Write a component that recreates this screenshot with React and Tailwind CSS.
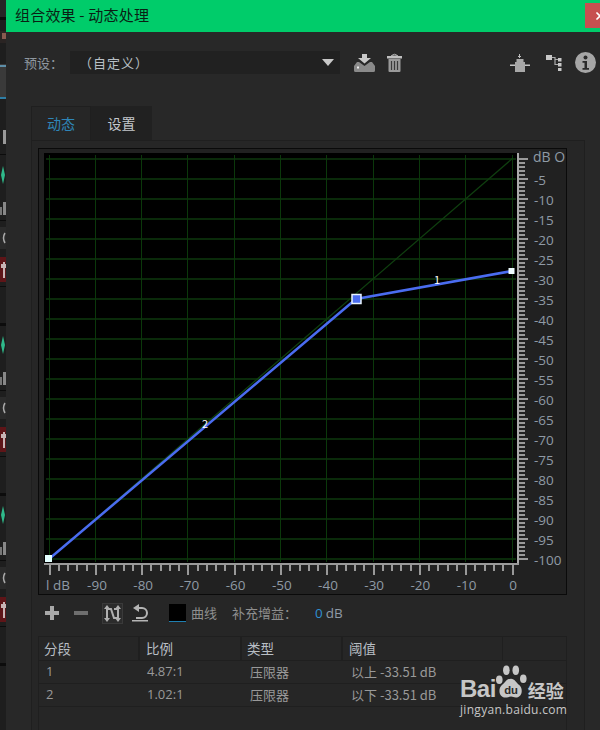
import { X } from 'lucide-react';

const cjk = '"Noto Sans CJK SC", "Noto Sans", sans-serif';
const ROWS = [
  ['1', '4.87:1', '压限器', '以上 -33.51 dB'],
  ['2', '1.02:1', '压限器', '以下 -33.51 dB'],
];

// strip of the window that sits behind this dialog
function BackgroundStrip() {
  const repeat = [0, 170, 340];
  return (
    <svg width="6" height="730" className="block shrink-0">
      <rect width="6" height="730" fill="#1e1e1e" />
      <rect y="0" width="6" height="17" fill="#262626" />
      <rect y="17" width="6" height="3" fill="#0c0c0c" />
      <rect y="31" width="6" height="12" fill="#2a2423" />
      <rect x="2" y="33" width="4" height="6" fill="#8a5a50" />
      <rect y="64" width="6" height="35" fill="#3a3a3a" />
      <rect y="65" width="6" height="2" fill="#5d8ea8" />
      <rect y="97" width="6" height="2" fill="#2f7ea6" />
      <rect x="3" y="130" width="3" height="14" fill="#999" />
      <rect y="154" width="6" height="1" fill="#0c0c0c" />
      {repeat.map((d) => (
        <g key={d} transform={`translate(0 ${d})`}>
          <path d="M3 166 L5 175 L3 184 L1 175 Z" fill="#2fb98a" />
          <rect x="0" y="207" width="2" height="8" fill="#777" />
          <rect x="3" y="202" width="3" height="13" fill="#888" />
          <rect y="220" width="6" height="1" fill="#0c0c0c" />
          <rect y="227" width="6" height="22" fill="#2b2b2b" />
          <path d="M5 233 Q2 238 5 243" stroke="#aaa" strokeWidth="1.5" fill="none" />
          <rect y="257" width="6" height="25" fill="#5e1518" />
          <rect x="3" y="262" width="2" height="16" fill="#c9b5b5" />
          <rect x="1" y="264" width="5" height="4" fill="#c9b5b5" />
          <rect y="286" width="6" height="1" fill="#0c0c0c" />
          <rect y="323" width="6" height="3" fill="#0c0c0c" />
        </g>
      ))}
    </svg>
  );
}

function PresetIcons() {
  return (
    <div className="flex items-center ml-[14px]">
      <svg width="22" height="18" viewBox="0 0 22 18" className="block">
        <path d="M8 0h5v4h4l-6.500 5.500L4 4h4z" fill="#c8c8c8" />
        <path d="M3 8h2l5.500 4 5.500-4h2l3 4v4.500a1.500 1.500 0 0 1-1.500 1.500H1.500A1.500 1.500 0 0 1 0 16.500V12z" fill="#8a8a8a" />
        <rect x="3" y="12.500" width="2" height="2" fill="#eee" />
      </svg>
      <svg width="15" height="19" viewBox="0 0 15 19" className="block ml-[11px]">
        <path d="M4.500 2.500 Q7.500 0 10.500 2.500 L10.500 3 L4.500 3Z" fill="none" stroke="#bbb" />
        <rect x="0" y="3" width="15" height="2.500" fill="#c0c0c0" />
        <path d="M1.500 6h12v12a1 1 0 0 1-1 1h-10a1 1 0 0 1-1-1z" fill="#9a9a9a" />
        <path d="M4.500 8v9M7.500 8v9M10.500 8v9" stroke="#3a3a3a" strokeWidth="1.200" />
      </svg>
    </div>
  );
}

function RightIcons() {
  return (
    <div className="flex items-center ml-auto">
      <svg width="20" height="18" viewBox="0 0 20 18" className="block">
        <path d="M9.500 0v4M8 2.500h3" stroke="#bbb" fill="none" />
        <rect x="6.500" y="5" width="7" height="3" fill="#aaa" />
        <rect x="0" y="10.500" width="20" height="1.500" fill="#c4c4c4" />
        <rect x="5" y="8" width="10" height="10" fill="#a8a8a8" />
      </svg>
      <svg width="16" height="16" viewBox="0 0 16 16" className="block ml-[16px]">
        <rect x="0" y="0" width="6" height="5" fill="#c8c8c8" />
        <rect x="12" y="3" width="3.500" height="3.500" fill="#c8c8c8" />
        <rect x="12" y="8" width="3.500" height="3.500" fill="#c8c8c8" />
        <rect x="12" y="13" width="3.500" height="3" fill="#c8c8c8" />
        <path d="M6 2.500h3v7h3M9 4.500h3" stroke="#aaa" strokeWidth="1.200" fill="none" />
      </svg>
      <svg width="21" height="21" viewBox="0 0 21 21" className="block ml-[13px]">
        <circle cx="10.500" cy="10.500" r="10.500" fill="#a6a6a6" />
        <circle cx="10.500" cy="5.500" r="2" fill="#2a2a2a" />
        <path d="M7.500 9h4.500v7h2v1.800H7.500V16h2v-5.200h-2z" fill="#2a2a2a" />
      </svg>
    </div>
  );
}

function CurveChart() {
  const hLines = Array.from({ length: 21 }, (_, i) => 159 + i * 20);
  const vLines = Array.from({ length: 11 }, (_, i) => Math.floor(49 + i * 46.3) + 0.5);
  const rightTicks = Array.from({ length: 101 }, (_, i) => i);
  const bottomTicks = Array.from({ length: 51 }, (_, i) => i);
  const rightLabels = Array.from({ length: 20 }, (_, i) => (i + 1) * 5);
  const bottomLabels = [90, 80, 70, 60, 50, 40, 30, 20, 10];
  return (
    <svg width="529" height="447" viewBox="38 148 529 447" className="block">
      <rect x="38.500" y="148.500" width="528" height="446" fill="#212121" stroke="#0a0a0a" />
      <rect x="44" y="153" width="473" height="410" fill="#000" />
      {hLines.map((y) => (
        <line key={y} x1="46" x2="516" y1={y} y2={y} stroke="#0a2a0a" strokeWidth="2" />
      ))}
      {vLines.map((x) => (
        <line key={x} x1={x} x2={x} y1="155" y2="562" stroke="#0b380b" />
      ))}
      <line x1="49" y1="559" x2="513" y2="158" stroke="#0f3f0f" strokeWidth="1.200" />
      <rect x="517" y="153" width="2" height="411" fill="#aaa" />
      <rect x="44" y="563" width="475" height="2" fill="#999" />
      {rightTicks.map((i) => {
        const y = 158 + i * 4;
        return <rect key={i} x="519" y={y} width={i % 5 === 0 ? 9 : 6} height="2" fill="#999" />;
      })}
      {bottomTicks.map((i) => {
        const x = Math.floor(49 + i * 9.26);
        return <rect key={i} x={x} y="565" width="2" height={i % 5 === 0 ? 10 : 6} fill="#999" />;
      })}
      <polyline points="49,559 356,299 512,271" fill="none" stroke="#4a6cf0" strokeWidth="2.500" />
      <rect x="352" y="294.500" width="9" height="9" fill="#4a6cf0" stroke="#e8f4ff" strokeWidth="1.500" />
      <rect x="508.500" y="268" width="6" height="6" fill="#eefcff" />
      <rect x="45" y="555" width="7" height="7" fill="#e4ffff" />
      <g fontSize="11" fill="#fff" textAnchor="middle" style={{ fontFamily: cjk }}>
        <text x="437" y="284">1</text>
        <text x="205" y="428">2</text>
      </g>
      <g fontSize="14" fill="#8f9aa5" style={{ fontFamily: '"Open Sans", sans-serif' }}>
        <text x="533" y="162" fontSize="14">dB O</text>
        {rightLabels.map((v, i) => (
          <text key={v} x="534" y={185 + i * 20} fontSize="13.500">-{v}</text>
        ))}
        <text x="46" y="590" fontSize="13.500">l dB</text>
        {bottomLabels.map((v, i) => (
          <text key={v} x={97 + i * 46.2} y="590" textAnchor="middle" fontSize="13.500">-{v}</text>
        ))}
        <text x="513" y="590" textAnchor="middle" fontSize="13.500">0</text>
      </g>
    </svg>
  );
}

function CurveTools() {
  return (
    <div className="flex items-center h-[41px] pb-[5px] pl-[7px]">
      <svg width="14" height="14" viewBox="0 0 14 14" className="block">
        <path d="M5 0h4v5h5v4H9v5H5V9H0V5h5z" fill="#a8a8a8" />
      </svg>
      <svg width="14" height="14" viewBox="0 0 14 14" className="block ml-[15px]">
        <rect y="5" width="14" height="4" fill="#6e6e6e" />
      </svg>
      <div className="w-[21px] h-[21px] ml-[14px] bg-[#2c2c2c] border border-[#3a3a3a] flex items-center justify-center">
        <svg width="19" height="19" viewBox="0 0 19 19" className="block">
          <path d="M4 3v13M15 3v13M4 5h4l3 9h4M15 5h-4" stroke="#b0b0b0" strokeWidth="2" fill="none" />
          <path d="M1 5l3-4 3 4zM12 5l3-4 3 4zM1 14l3 4 3-4zM12 14l3 4 3-4z" fill="#b0b0b0" />
        </svg>
      </div>
      <svg width="17" height="18" viewBox="0 0 17 18" className="block ml-[9px]">
        <path d="M5 4h5a5 5 0 0 1 0 10H4" stroke="#b4b4b4" strokeWidth="2" fill="none" />
        <path d="M7 0v8L1 4z" fill="#b4b4b4" />
        <rect x="0" y="16" width="16" height="1.500" fill="#b4b4b4" />
      </svg>
      <div className="w-[17px] h-[18px] ml-[20px] bg-black border-b border-[#1f7fb0]" />
      <span className="ml-[5px] text-[13px] text-[#8f8f8f]">曲线</span>
      <span className="ml-[15px] w-[65px] whitespace-nowrap text-[13px] text-[#8f8f8f]">补充增益：</span>
      <span className="ml-[18px] text-[13.500px] text-[#2f8fd0]" style={{ fontFamily: '"Open Sans", sans-serif' }}>0</span>
      <span className="ml-[3px] text-[13.500px] text-[#8f9aa5]" style={{ fontFamily: '"Open Sans", sans-serif' }}>dB</span>
    </div>
  );
}

function BaiduMark() {
  return (
    <div className="absolute left-[460px] top-[665px] w-[110px] h-[52px] text-[#c6c6c6]">
      <div className="flex items-start">
        <span className="text-[24px] leading-[26px] font-bold tracking-[-0.5px] mt-[11px]" style={{ fontFamily: '"Liberation Sans", sans-serif' }}>Bai</span>
        <svg width="32" height="35" viewBox="0 0 34 36" className="block">
          <ellipse cx="3.500" cy="15" rx="3.500" ry="4.500" fill="#c6c6c6" />
          <ellipse cx="11" cy="5" rx="3.500" ry="5" fill="#c6c6c6" />
          <ellipse cx="21" cy="5" rx="3.500" ry="5" fill="#c6c6c6" />
          <ellipse cx="29" cy="14" rx="3.500" ry="4.500" fill="#c6c6c6" />
          <path d="M16 14c4 0 5 4 9 7 4 4 3 13-4 13-2 0-3-1-5-1s-3 1-6 1c-7 0-8-9-4-13 4-3 5-7 10-7z" fill="#c6c6c6" />
          <text x="16" y="30" fontSize="12" fontWeight="700" fill="#2a2a2a" textAnchor="middle" style={{ fontFamily: '"Liberation Sans", sans-serif' }}>du</text>
        </svg>
        <span className="text-[18px] leading-[22px] font-bold mt-[14px]">经验</span>
      </div>
      <div className="text-[12px] leading-[14px] mt-[1px] tracking-[0.3px]" style={{ fontFamily: '"Open Sans", sans-serif' }}>jingyan.baidu.com</div>
    </div>
  );
}

export default function App() {
  return (
    <div className="relative flex w-[600px] h-[730px] overflow-hidden bg-[#282828]" style={{ fontFamily: cjk }}>
      <BackgroundStrip />
      <div className="flex-1 min-w-0 flex flex-col">
        <header className="flex h-8 shrink-0 bg-[#00cc6a]">
          <div className="pl-[9px] text-[15px] leading-[30px] text-[#0a1f14] tracking-[0.2px]">组合效果 - 动态处理</div>
          <button className="ml-auto -mr-[15px] mt-[3px] w-[30px] h-[25px] bg-[#c75050] flex items-center justify-center text-white">
            <X size={12} strokeWidth={3.500} />
          </button>
        </header>

        <div className="flex items-center h-[23px] mt-[19px] pl-[18px] pr-[4px] shrink-0">
          <span className="w-[46px] text-[13px] text-[#8f98a0]">预设：</span>
          <div className="flex items-center w-[270px] h-[23px] bg-[#212121] pl-[9px] pr-[6px]">
            <span className="text-[13px] text-[#b9c0c6] tracking-[1px]">（自定义）</span>
            <svg width="12" height="8" viewBox="0 0 12 8" className="block ml-auto"><path d="M0 0h12L6 7z" fill="#c8c8c8" /></svg>
          </div>
          <PresetIcons />
          <RightIcons />
        </div>

        <div className="flex ml-[25px] mt-[32px] h-[34px] shrink-0 text-[14px]">
          <div className="w-[60px] bg-[#262626] border-t border-l border-r border-[#1f1f1f] flex items-center justify-center text-[#2f86b8]">动态</div>
          <div className="w-[61px] bg-[#212121] flex items-center justify-center text-[#c4c8cc]">设置</div>
        </div>

        <section className="flex-1 ml-[25px] mr-[15px] pl-[6px] pt-[7px] bg-[#262626] border-t border-l border-r border-[#1f1f1f]">
          <CurveChart />
          <CurveTools />
          <div className="w-[529px] h-[200px] border border-[#1f1f1f] text-[13px]">
            <div className="flex h-[24px] bg-[#262626] border-b border-[#1f1f1f] text-[#b8bec4] text-[13.500px]">
              <div className="w-[101px] pl-[5px] leading-[23px] border-r-2 border-[#1f1f1f]">分段</div>
              <div className="w-[102px] pl-[6px] leading-[23px] border-r-2 border-[#1f1f1f]">比例</div>
              <div className="w-[101px] pl-[5px] leading-[23px] border-r-2 border-[#1f1f1f]">类型</div>
              <div className="w-[160px] pl-[6px] leading-[23px] border-r border-[#1f1f1f]">阈值</div>
            </div>
            {ROWS.map((row) => (
              <div key={row[0]} className="flex h-[23px] items-center border-b border-[#1f1f1f] text-[#999]">
                <div className="w-[101px] pl-[7px]" style={{ fontFamily: '"Open Sans", sans-serif' }}>{row[0]}</div>
                <div className="w-[102px] pl-[7px]" style={{ fontFamily: '"Open Sans", sans-serif' }}>{row[1]}</div>
                <div className="w-[101px] pl-[8px]">{row[2]}</div>
                <div className="pl-[8px] whitespace-nowrap">{row[3]}</div>
              </div>
            ))}
          </div>
        </section>
      </div>
      <BaiduMark />
    </div>
  );
}
